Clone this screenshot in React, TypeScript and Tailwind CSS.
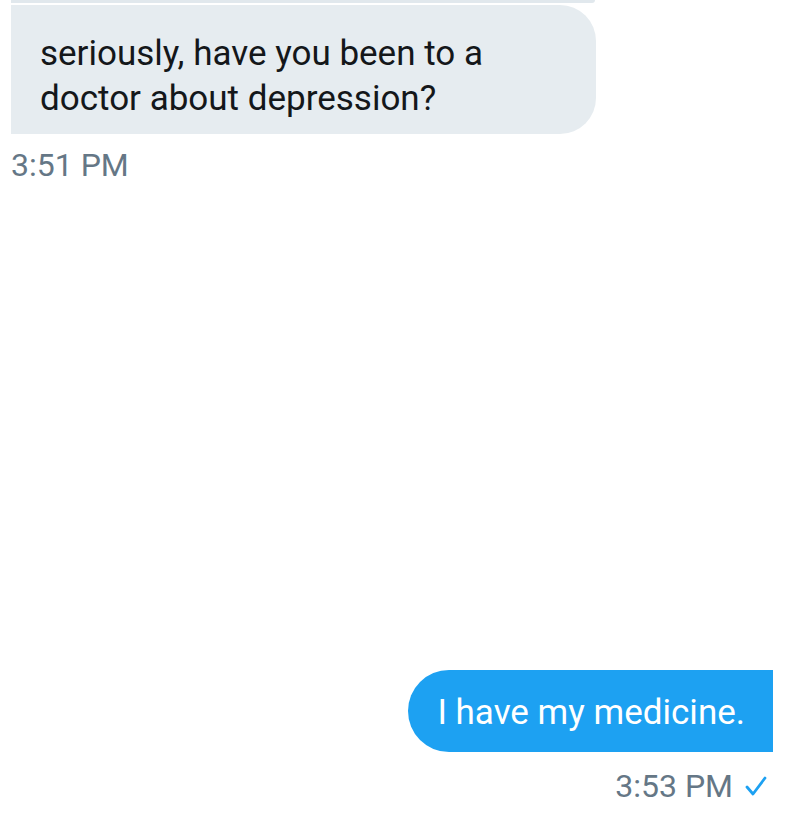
const App = () => {
  return (
    <div
      className="w-[800px] h-[822px] bg-white overflow-hidden flex flex-col"
      style={{ fontFamily: 'Roboto, "Noto Sans", sans-serif' }}
    >
      {/* bottom edge of an earlier bubble */}
      <div className="ml-[11px] w-[584px] h-[3px] bg-[#e1e8ed] rounded-br-[3px]" />

      {/* incoming */}
      <div className="mt-[2px] ml-[11px] w-[585px] bg-[#e6ecf0] rounded-r-[36px] pl-[29px] pr-[20px] pt-[26px] pb-[13px]">
        <p className="text-[35px] leading-[45px] text-[#14171a]">
          seriously, have you been to a
          <br />
          doctor about depression?
        </p>
      </div>
      <div className="ml-[11px] mt-[13px] text-[32px] leading-[36px] text-[#657786]">
        3:51 PM
      </div>

      {/* outgoing */}
      <div className="mt-auto mb-[18px] flex flex-col items-end mr-[27px]">
        <div className="bg-[#1da1f2] rounded-l-[41px] pl-[29px] pr-[28px] pt-[20px] pb-[17px]">
          <p className="text-[35px] leading-[45px] text-white">I have my medicine.</p>
        </div>
        <div className="mt-[16px] flex items-center gap-[12px] mr-[6px]">
          <span className="text-[32px] leading-[36px] text-[#657786]">3:53 PM</span>
          <svg width="22" height="20" viewBox="0 0 22 20" fill="none">
            <path d="M2 11 L8 18 L20 2" stroke="#1da1f2" strokeWidth="2.8" strokeLinecap="round" strokeLinejoin="round" />
          </svg>
        </div>
      </div>
    </div>
  );
};

export default App;
